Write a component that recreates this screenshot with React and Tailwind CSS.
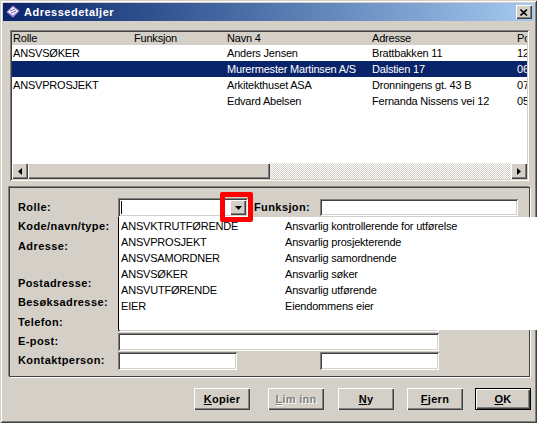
import React from 'react';

const raised = 'shadow-[inset_1px_1px_#ffffff,inset_-1px_-1px_#404040,inset_-2px_-2px_#808080]';
const sunken = 'shadow-[inset_1px_1px_#808080,inset_-1px_-1px_#ffffff,inset_2px_2px_#404040,inset_-2px_-2px_#d4d0c8]';

const rows = [
  { rolle: 'ANSVSØKER', funksjon: '', navn: 'Anders Jensen', adresse: 'Brattbakken 11', p: '12' },
  { rolle: '', funksjon: '', navn: 'Murermester Martinsen A/S', adresse: 'Dalstien 17', p: '06', sel: true },
  { rolle: 'ANSVPROSJEKT', funksjon: '', navn: 'Arkitekthuset ASA', adresse: 'Dronningens gt. 43 B', p: '07' },
  { rolle: '', funksjon: '', navn: 'Edvard Abelsen', adresse: 'Fernanda Nissens vei 12', p: '05' },
];

const roller = [
  ['ANSVKTRUTFØRENDE', 'Ansvarlig kontrollerende for utførelse'],
  ['ANSVPROSJEKT', 'Ansvarlig prosjekterende'],
  ['ANSVSAMORDNER', 'Ansvarlig samordnende'],
  ['ANSVSØKER', 'Ansvarlig søker'],
  ['ANSVUTFØRENDE', 'Ansvarlig utførende'],
  ['EIER', 'Eiendommens eier'],
];

function Cols({ a, b, c, d, e }) {
  return (
    <>
      <span className="w-[122px] pl-[1px] shrink-0 whitespace-nowrap">{a}</span>
      <span className="w-[93px] shrink-0 whitespace-nowrap">{b}</span>
      <span className="w-[145px] shrink-0 whitespace-nowrap">{c}</span>
      <span className="w-[145px] shrink-0 whitespace-nowrap">{d}</span>
      <span className="flex-1 whitespace-nowrap overflow-hidden">{e}</span>
    </>
  );
}

function Arrow({ dir }) {
  const pts = dir === 'left' ? '5,1 1,4.5 5,8' : dir === 'right' ? '1,1 5,4.5 1,8' : '0,0 7,0 3.5,4';
  const vb = dir === 'down' ? '0 0 7 4' : '0 0 6 9';
  return (
    <svg width={dir === 'down' ? 7 : 6} height={dir === 'down' ? 4 : 9} viewBox={vb}>
      <polygon points={pts} fill="#000" />
    </svg>
  );
}

function Label({ children, className = '' }) {
  return <span className={`w-[100px] shrink-0 font-bold tracking-[0.4px] ${className}`}>{children}</span>;
}

function Field({ w, h = 'h-[19px]' }) {
  return <div className={`${w} ${h} bg-white ${sunken}`} />;
}

function Btn({ children, className = '', disabled, def }) {
  return (
    <div className={`h-[22px] w-[56px] flex items-center justify-center font-bold tracking-[0.3px] bg-[#d4d0c8] ${def ? 'border border-black shadow-[inset_1px_1px_#ffffff,inset_-1px_-1px_#404040,inset_-2px_-2px_#808080]' : raised} ${disabled ? 'text-[#808080] [text-shadow:1px_1px_0_#fff]' : 'text-black'} ${className}`}>
      {children}
    </div>
  );
}

export default function App() {
  return (
    <div className="relative w-[537px] h-[423px] overflow-hidden bg-[#d4d0c8] p-[3px] text-[11px] tracking-[-0.2px] text-black font-['Liberation_Sans',Arial,sans-serif] shadow-[inset_1px_1px_#d4d0c8,inset_-1px_-1px_#404040,inset_2px_2px_#ffffff,inset_-2px_-2px_#808080]">
      {/* title bar */}
      <div className="h-[18px] flex items-center bg-gradient-to-r from-[#0a246a] to-[#a6caf0] pl-[2px] pr-[2px]">
        <svg width="16" height="16" viewBox="0 0 16 16" className="mr-[3px]">
          <polygon points="8,1 15,7 8,14 1,8" fill="#9a8ed8" stroke="#3a2a80" strokeWidth="1" />
          <polygon points="8,3 13,7 8,11 3,8" fill="#ffffff" />
          <line x1="5" y1="7" x2="10" y2="5" stroke="#6a5ab8" />
          <line x1="6" y1="9" x2="11" y2="7" stroke="#6a5ab8" />
        </svg>
        <span className="text-white font-bold text-[11px] tracking-[0.5px]">Adressedetaljer</span>
        <div className={`ml-auto w-[16px] h-[14px] bg-[#d4d0c8] flex items-center justify-center ${raised}`}>
          <svg width="8" height="7" viewBox="0 0 8 7">
            <path d="M0.5 0.5 L7 6.5 M7 0.5 L0.5 6.5" stroke="#000" strokeWidth="1.6" />
          </svg>
        </div>
      </div>

      {/* list view */}
      <div className={`mt-[9px] ml-[7px] w-[519px] h-[151px] bg-white p-[2px] flex flex-col ${sunken}`}>
        <div className="h-[13px] flex items-start leading-[12px] bg-[#d4d0c8] text-black">
          <Cols a="Rolle" b="Funksjon" c="Navn 4" d="Adresse" e="Po" />
        </div>
        <div className="flex-1">
          {rows.map((r, i) => (
            <div key={i} className={`h-[16px] flex items-center ${r.sel ? 'bg-[#0a246a] text-white' : ''}`}>
              <Cols a={r.rolle} b={r.funksjon} c={r.navn} d={r.adresse} e={r.p} />
            </div>
          ))}
        </div>
        <div className="h-[16px] flex">
          <div className={`w-[16px] h-[16px] bg-[#d4d0c8] flex items-center justify-center ${raised}`}>
            <Arrow dir="left" />
          </div>
          <div className={`w-[242px] h-[16px] bg-[#d4d0c8] ${raised}`} />
          <div className="flex-1 bg-[repeating-conic-gradient(#ffffff_0_25%,#d4d0c8_0_50%)] bg-[length:2px_2px]" />
          <div className={`w-[16px] h-[16px] bg-[#d4d0c8] flex items-center justify-center ${raised}`}>
            <Arrow dir="right" />
          </div>
        </div>
      </div>

      {/* details panel */}
      <div className="mt-[6px] ml-[6px] w-[521px] h-[190px] border border-[#404040] shadow-[1px_1px_0_#ffffff,-1px_-1px_0_#808080] pt-[10px] pl-[8px] flex flex-col">
        <div className="h-[19px] flex items-center">
          <Label>Rolle:</Label>
          <div className={`w-[130px] h-[19px] bg-white flex items-center pl-[3px] pr-[2px] ${sunken}`}>
            <div className="w-[1px] h-[13px] bg-black" />
            <div className={`ml-auto w-[16px] h-[15px] bg-[#d4d0c8] flex items-center justify-center ${raised}`}>
              <Arrow dir="down" />
            </div>
          </div>
          <span className="ml-[6px] w-[66px] font-bold tracking-[0.4px]">Funksjon:</span>
          <Field w="w-[198px]" h="h-[17px]" />
        </div>
        <div className="h-[18px] flex items-center">
          <Label>Kode/navn/type:</Label>
          <Field w="w-[321px]" h="h-[18px]" />
        </div>
        <div className="h-[39px] flex items-start pt-[3px]">
          <Label>Adresse:</Label>
        </div>
        <div className="h-[19px] flex items-center">
          <Label>Postadresse:</Label>
        </div>
        <div className="h-[19px] flex items-center">
          <Label>Besøksadresse:</Label>
        </div>
        <div className="h-[20px] flex items-center">
          <Label>Telefon:</Label>
          <Field w="w-[321px]" h="h-[19px]" />
        </div>
        <div className="h-[19px] flex items-center">
          <Label>E-post:</Label>
          <Field w="w-[321px]" h="h-[18px]" />
        </div>
        <div className="h-[19px] flex items-center">
          <Label>Kontaktperson:</Label>
          <Field w="w-[119px]" h="h-[18px]" />
          <div className="w-[83px]" />
          <Field w="w-[119px]" h="h-[18px]" />
        </div>
      </div>

      {/* buttons */}
      <div className="mt-[11px] ml-[191px] flex">
        <Btn><span><u>K</u>opier</span></Btn>
        <Btn disabled className="ml-[18px]"><span><u>L</u>im inn</span></Btn>
        <Btn className="ml-[14px]"><span><u>N</u>y</span></Btn>
        <Btn className="ml-[13px]"><span><u>F</u>jern</span></Btn>
        <Btn def className="ml-[12px]"><span><u>O</u>K</span></Btn>
      </div>

      {/* open dropdown list */}
      <div className="absolute left-[118px] top-[217px] w-[440px] h-[113px] bg-white border-l border-black pt-[1px]">
        {roller.map(([k, v]) => (
          <div key={k} className="h-[16px] flex items-center">
            <span className="w-[166px] pl-[2px] whitespace-nowrap">{k}</span>
            <span className="whitespace-nowrap">{v}</span>
          </div>
        ))}
      </div>

      {/* red highlight */}
      <div className="absolute left-[220px] top-[192px] w-[33px] h-[30px] border-[5px] border-[#ff0000] rounded-[2px]" />
    </div>
  );
}
